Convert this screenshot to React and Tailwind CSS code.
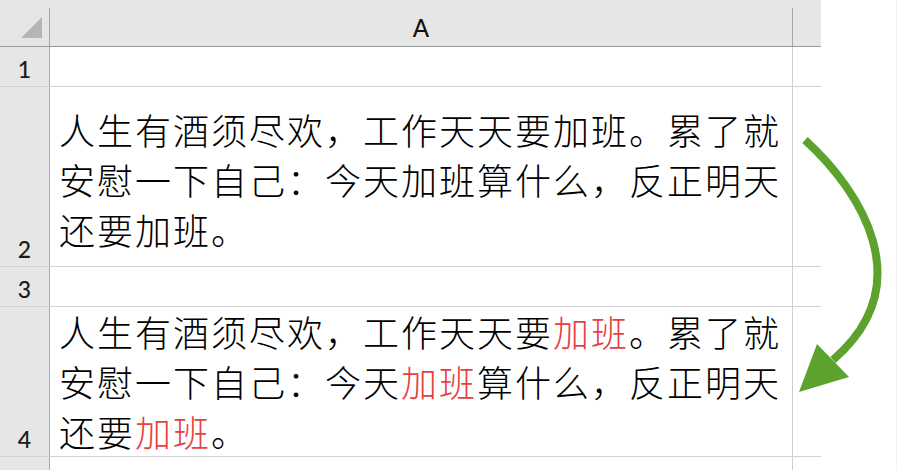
import React from "react";

const cjk = { fontFamily: '"Noto Sans CJK SC", "Noto Sans", sans-serif' };
const ui = { fontFamily: 'Lato, "Open Sans", "Liberation Sans", sans-serif' };

function RowHead({ n }) {
  return (
    <div
      className="w-[50px] shrink-0 bg-[#e6e6e6] border-r border-[#a8a8a8] flex items-end justify-center pb-[3px] text-[23px] leading-[28px] font-medium text-[#1a1a1a]"
      style={ui}
    >
      {n}
    </div>
  );
}

function Line({ parts }) {
  return (
    <div className="whitespace-nowrap">
      {parts.map((p, i) =>
        typeof p === "string" ? (
          <span key={i}>{p}</span>
        ) : (
          <span key={i} className="text-[#e8403f]">
            {p.red}
          </span>
        )
      )}
    </div>
  );
}

function TextCell({ lines, pad }) {
  return (
    <div
      className={`w-[743px] shrink-0 border-r border-[#cfcfcf] flex flex-col justify-end pl-[9px] text-[36px] leading-[50px] tracking-[2px] font-light text-black ${pad}`}
      style={cjk}
    >
      {lines.map((l, i) => (
        <Line key={i} parts={l} />
      ))}
    </div>
  );
}

const plain = [
  ["人生有酒须尽欢，工作天天要加班。累了就"],
  ["安慰一下自己：今天加班算什么，反正明天"],
  ["还要加班。"],
];

const marked = [
  ["人生有酒须尽欢，工作天天要", { red: "加班" }, "。累了就"],
  ["安慰一下自己：今天", { red: "加班" }, "算什么，反正明天"],
  ["还要", { red: "加班" }, "。"],
];

export default function App() {
  return (
    <div className="relative w-[900px] h-[470px] bg-white overflow-hidden">
      <div className="flex h-full">
        <div className="w-[821px] flex flex-col">
          {/* column header band */}
          <div className="h-[8px] bg-[#e6e6e6]" />
          <div className="flex h-[39px] bg-[#e6e6e6] border-b border-[#9a9a9a]">
            <div className="w-[50px] shrink-0 border-r border-[#a8a8a8] flex items-start justify-end pt-[9px] pr-[6px]">
              <svg width="22" height="22" viewBox="0 0 22 22">
                <polygon points="21,0 21,21 0,21" fill="#b5b5b5" />
              </svg>
            </div>
            <div
              className="w-[743px] shrink-0 border-r border-[#a8a8a8] flex items-center justify-center text-[24px] font-medium text-[#111] pt-[1px]"
              style={ui}
            >
              A
            </div>
            <div className="flex-1" />
          </div>

          {/* row 1 */}
          <div className="flex h-[40px] border-b border-[#d2d2d2]">
            <RowHead n="1" />
            <div className="w-[743px] shrink-0 border-r border-[#cfcfcf]" />
            <div className="flex-1" />
          </div>

          {/* row 2 */}
          <div className="flex h-[180px] border-b border-[#d2d2d2]">
            <RowHead n="2" />
            <TextCell lines={plain} pad="pb-[12px]" />
            <div className="flex-1" />
          </div>

          {/* row 3 */}
          <div className="flex h-[40px] border-b border-[#d2d2d2]">
            <RowHead n="3" />
            <div className="w-[743px] shrink-0 border-r border-[#cfcfcf]" />
            <div className="flex-1" />
          </div>

          {/* row 4 */}
          <div className="flex h-[150px] border-b border-[#d2d2d2]">
            <RowHead n="4" />
            <TextCell lines={marked} pad="pb-[0px]" />
            <div className="flex-1" />
          </div>

          {/* row 5 */}
          <div className="flex flex-1">
            <div className="w-[50px] shrink-0 bg-[#e6e6e6] border-r border-[#a8a8a8]" />
            <div className="w-[743px] shrink-0 border-r border-[#cfcfcf]" />
            <div className="flex-1" />
          </div>
        </div>
        <div className="flex-1 border-r border-[#f2f2f2] mr-[3px]" />
      </div>

      {/* curved green arrow from the plain text down to the highlighted copy */}
      <svg
        className="absolute inset-0 pointer-events-none"
        width="900"
        height="470"
        viewBox="0 0 900 470"
      >
        <path
          d="M 805 140 C 862 192, 920 285, 833 360"
          fill="none"
          stroke="#5ca22c"
          strokeWidth="8"
        />
        <polygon points="799,392 817,344 849,377" fill="#5ca22c" />
      </svg>
    </div>
  );
}
